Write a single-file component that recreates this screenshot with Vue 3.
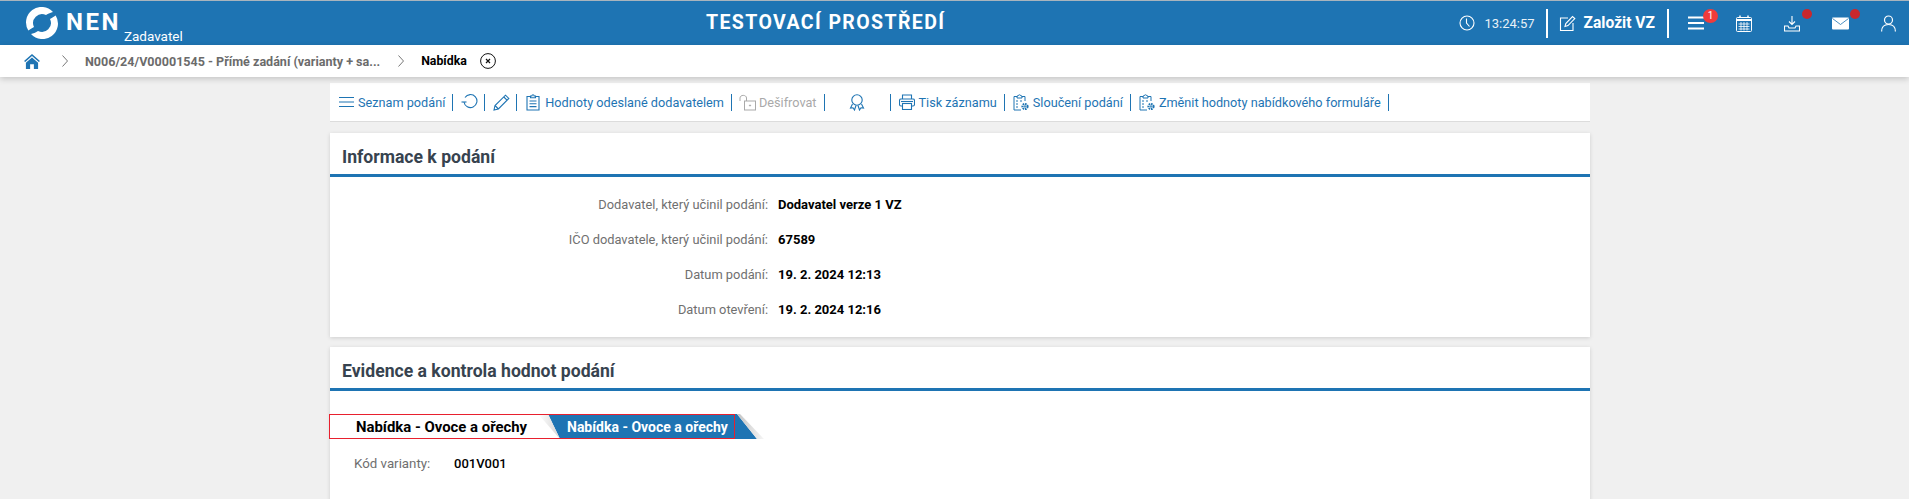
<template>
  <div class="page">
    <header class="topbar">
      <div class="logo">
        <svg class="logo-mark" width="32" height="32" viewBox="0 0 32 32" fill="#fff">
          <path d="M2.3 23.5 A15.5 15.5 0 0 1 27 5 C25 5.5 22 6.5 20 8 A9 9 0 0 0 8 20 C6 21 4 22.5 2.3 23.5 Z" />
          <path d="M2.3 23.5 A15.5 15.5 0 0 1 27 5 C25 5.5 22 6.5 20 8 A9 9 0 0 0 8 20 C6 21 4 22.5 2.3 23.5 Z" transform="rotate(180 16 16)" />
        </svg>
        <span class="logo-name">NEN</span>
        <span class="logo-role">Zadavatel</span>
      </div>
      <div class="env">TESTOVACÍ PROSTŘEDÍ</div>
      <div class="top-right">
        <svg class="clock" width="16" height="16" viewBox="0 0 16 16" fill="none" stroke="#fff" stroke-width="1.1">
          <circle cx="8" cy="8" r="7" />
          <path d="M7.5 3.5 V8 L10.5 11.5" />
        </svg>
        <span class="time">13:24:57</span>
        <span class="top-sep"></span>
        <svg class="pen" width="17" height="17" viewBox="0 0 17 17" fill="none" stroke="#fff" stroke-width="1.1">
          <path d="M9 3 H1.5 V15.5 H14 V8" />
          <path d="M6 11.5 L6.8 8.5 L13.5 1.5 L15.8 3.6 L9 10.6 Z" />
        </svg>
        <span class="create">Založit VZ</span>
        <span class="top-sep second"></span>
        <div class="top-icon">
          <svg width="16" height="14" viewBox="0 0 16 14" fill="#fff">
            <rect y="0.5" width="16" height="2" />
            <rect y="6" width="16" height="2" />
            <rect y="11.5" width="16" height="2" />
          </svg>
          <span class="badge">1</span>
        </div>
        <div class="top-icon">
          <svg width="16" height="17" viewBox="0 0 16 17" fill="none" stroke="#fff">
            <rect x="0.5" y="2.5" width="15" height="14" rx="1" />
            <path d="M0.5 5 H15.5" stroke-width="2" />
            <path d="M4 0.5 V3 M12 0.5 V3" stroke-width="1.5" />
            <path d="M2.5 9 H13.5 M2.5 11.5 H13.5 M2.5 14 H13.5 M5 7 V15.5 M8 7 V15.5 M11 7 V15.5" stroke-width="0.8" />
          </svg>
        </div>
        <div class="top-icon">
          <svg width="16" height="17" viewBox="0 0 16 17" fill="none" stroke="#fff" stroke-width="1.1">
            <path d="M8 1 V9 M5 6.5 L8 9.5 L11 6.5" />
            <path d="M4 11 H0.5 V16 H15.5 V11 H12 L11 13 H5 Z" />
          </svg>
          <span class="dot"></span>
        </div>
        <div class="top-icon">
          <svg width="17" height="13" viewBox="0 0 17 13">
            <rect width="17" height="12" y="0.5" rx="1" fill="#fff" />
            <path d="M0.5 1.5 L8.5 7.5 L16.5 1.5" fill="none" stroke="#1e74b3" stroke-width="0.8" />
          </svg>
          <span class="dot"></span>
        </div>
        <div class="top-icon last">
          <svg width="15" height="17" viewBox="0 0 15 17" fill="none" stroke="#fff" stroke-width="1.2">
            <circle cx="7.5" cy="5" r="4" />
            <path d="M0.6 16.5 C0.6 11.5 3.5 9.5 7.5 9.5 C11.5 9.5 14.4 11.5 14.4 16.5" />
          </svg>
        </div>
      </div>
    </header>

    <nav class="crumbs">
      <svg class="home" width="16" height="15" viewBox="0 0 17 16" fill="#1e74b3">
        <path d="M8.5 0 L17 7.5 L15.8 8.6 L8.5 2.2 L1.2 8.6 L0 7.5 Z" />
        <path d="M8.5 3.6 L15 9.2 V16 H10.5 V11 H6.5 V16 H2 V9.2 Z" />
      </svg>
      <svg class="chev" width="6" height="12" viewBox="0 0 6 12" fill="none" stroke="#777"><path d="M0.5 0.5 L5.5 6 L0.5 11.5" /></svg>
      <span class="crumb">N006/24/V00001545 - Přímé zadání (varianty + sa...</span>
      <svg class="chev second" width="6" height="12" viewBox="0 0 6 12" fill="none" stroke="#777"><path d="M0.5 0.5 L5.5 6 L0.5 11.5" /></svg>
      <span class="crumb current">Nabídka</span>
      <svg class="close" width="16" height="16" viewBox="0 0 16 16" fill="none" stroke="#111">
        <circle cx="8" cy="8" r="7.4" />
        <path d="M6 6 L10 10 M10 6 L6 10" stroke-width="1.2" />
      </svg>
    </nav>

    <main class="content">
      <div class="toolbar">
        <a class="tool">
          <svg width="15" height="12" viewBox="0 0 15 12" fill="none" stroke="#1e74b3"><path d="M0 1.5 H15 M0 6 H15 M0 10.5 H15" /></svg>
          <span>Seznam podání</span>
        </a>
        <a class="tool icon-only">
          <svg width="17" height="16" viewBox="0 0 17 16" fill="none" stroke="#1e74b3" stroke-width="1.1">
            <path d="M4 3.5 A6.5 6.5 0 1 1 3 8" />
            <path d="M0.5 8 H5.5" />
          </svg>
        </a>
        <a class="tool icon-only">
          <svg width="17" height="17" viewBox="0 0 17 17" fill="none" stroke="#1e74b3" stroke-width="1.1">
            <path d="M1 16 L2 11.5 L12.5 1.2 L15.8 4.4 L5.4 15 Z M2 11.5 L5.4 15 M10.8 3 L14 6.2" />
          </svg>
        </a>
        <a class="tool clip">
          <svg width="14" height="17" viewBox="0 0 14 17" fill="none" stroke="#1e74b3" stroke-width="1.1">
            <path d="M4.5 2.5 H1 V16 H13 V2.5 H9.5" />
            <path d="M4.5 3.8 V2 H5.8 C6 0.4 8 0.4 8.2 2 H9.5 V3.8 Z" />
            <path d="M3.5 7 H10.5 M3.5 9.8 H10.5 M3.5 12.6 H10.5" />
          </svg>
          <span>Hodnoty odeslané dodavatelem</span>
        </a>
        <a class="tool disabled">
          <svg width="17" height="17" viewBox="0 0 17 17" fill="none" stroke="#a9a9a9" stroke-width="1">
            <rect x="5.5" y="7" width="11" height="9" />
            <path d="M1 7 V4 C1 0.5 7.5 0.5 7.5 4 V7" />
            <circle cx="11" cy="11.5" r="0.6" fill="#a9a9a9" />
          </svg>
          <span>Dešifrovat</span>
        </a>
        <a class="tool award">
          <svg width="16" height="17" viewBox="0 0 15 17" fill="none" stroke="#1e74b3" stroke-width="1.1">
            <circle cx="7.5" cy="6" r="5.2" />
            <path d="M3 10 L1 14 L3.5 13.8 L5 16 L6.5 11.5 M12 10 L14 14 L11.5 13.8 L10 16 L8.5 11.5" />
          </svg>
        </a>
        <a class="tool">
          <svg width="16" height="16" viewBox="0 0 16 16" fill="none" stroke="#1e74b3" stroke-width="1.1">
            <path d="M3.5 5 V1 H12.5 V5" />
            <rect x="0.5" y="5" width="15" height="7" rx="1.5" />
            <rect x="3.5" y="9.5" width="9" height="6" fill="#fff" />
            <path d="M2 7.5 H14" />
          </svg>
          <span>Tisk záznamu</span>
        </a>
        <a class="tool">
          <svg width="16" height="17" viewBox="0 0 16 17" fill="none" stroke="#1e74b3" stroke-width="1">
            <path d="M4 2.5 H1 V16 H8 M12 7 V2.5 H9" />
            <path d="M4 4 V2 H5 C5.3 0.4 7.7 0.4 8 2 H9 V4 Z" />
            <path d="M3 7 H5 M3 10 H5 M3 13 H5 M7 7 H9" />
            <circle cx="12" cy="12.5" r="2.6" stroke-width="2" stroke-dasharray="1.6 0.8" />
            <circle cx="12" cy="12.5" r="0.8" />
          </svg>
          <span>Sloučení podání</span>
        </a>
        <a class="tool">
          <svg width="16" height="17" viewBox="0 0 16 17" fill="none" stroke="#1e74b3" stroke-width="1">
            <path d="M4 2.5 H1 V16 H8 M12 7 V2.5 H9" />
            <path d="M4 4 V2 H5 C5.3 0.4 7.7 0.4 8 2 H9 V4 Z" />
            <path d="M3 7 H5 M3 10 H5 M3 13 H5 M7 7 H9" />
            <circle cx="12" cy="12.5" r="2.6" stroke-width="2" stroke-dasharray="1.6 0.8" />
            <circle cx="12" cy="12.5" r="0.8" />
          </svg>
          <span>Změnit hodnoty nabídkového formuláře</span>
        </a>
      </div>

      <section class="card info">
        <h2 class="card-title">Informace k podání</h2>
        <dl class="rows">
          <div v-for="row in infoRows" :key="row.label" class="row">
            <dt>{{ row.label }}:</dt>
            <dd>{{ row.value }}</dd>
          </div>
        </dl>
      </section>

      <section class="card evidence">
        <h2 class="card-title">Evidence a kontrola hodnot podání</h2>
        <div class="tabs">
          <div class="tab plain">Nabídka - Ovoce a ořechy</div>
          <div class="tab active">Nabídka - Ovoce a ořechy</div>
          <div class="fold fold-left"></div>
          <div class="fold fold-right"></div>
          <div class="tab-outline"></div>
        </div>
        <div class="variant">
          <span class="variant-label">Kód varianty:</span>
          <span class="variant-value">001V001</span>
        </div>
      </section>
    </main>
  </div>
</template>

<script setup>
const infoRows = [
  { label: 'Dodavatel, který učinil podání', value: 'Dodavatel verze 1 VZ' },
  { label: 'IČO dodavatele, který učinil podání', value: '67589' },
  { label: 'Datum podání', value: '19. 2. 2024 12:13' },
  { label: 'Datum otevření', value: '19. 2. 2024 12:16' }
]
</script>

<style>
html, body {
  margin: 0;
  height: 100%;
  overflow: hidden;
  background: #f0f0f0;
}
</style>

<style scoped>
.page {
  height: 499px;
  overflow: hidden;
  background: #f0f0f0;
  font-family: Roboto, "Liberation Sans", sans-serif;
  font-size: 13px;
}

.topbar {
  height: 44px;
  border-top: 1px solid #a9b4bd;
  background: #1e74b3;
  color: #fff;
  display: flex;
  align-items: center;
}

.logo {
  display: flex;
  align-items: center;
  padding-left: 26px;
  width: 680px;
  box-sizing: border-box;
}

.logo-name {
  margin-left: 8px;
  font-size: 24px;
  font-weight: 700;
  letter-spacing: 2.5px;
  line-height: 24px;
  margin-top: -3px;
}

.logo-role {
  margin-left: 3px;
  font-size: 13.5px;
  margin-top: 26px;
  line-height: 16px;
}

.env {
  font-size: 19.5px;
  font-weight: 700;
  letter-spacing: 1.4px;
  margin: -1px 0 0 26px;
}

.top-right {
  margin-left: auto;
  display: flex;
  align-items: center;
  height: 100%;
  padding-right: 13px;
}

.clock {
  margin-right: 9px;
}

.time {
  font-size: 13px;
  color: #e8f1f7;
}

.top-sep {
  width: 2px;
  height: 29px;
  background: #fff;
  margin: 0 11px 0 11px;
}

.top-sep.second {
  margin: 0 19px 0 12px;
}

.create {
  margin-left: 8px;
  font-size: 15.6px;
  font-weight: 700;
}

.top-icon {
  position: relative;
  height: 17px;
  display: flex;
  align-items: center;
  margin-right: 32px;
}

.top-icon.last {
  margin-right: 0;
}

.badge {
  position: absolute;
  top: -6px;
  left: 15px;
  width: 15px;
  height: 14px;
  border-radius: 50%;
  background: #ef3b3b;
  font-size: 10px;
  line-height: 14px;
  text-align: center;
}

.dot {
  position: absolute;
  top: -6px;
  left: 18px;
  width: 10px;
  height: 10px;
  border-radius: 50%;
  background: #c9282d;
}

.crumbs {
  height: 32px;
  background: #fff;
  box-shadow: 0 2px 6px rgba(0, 0, 0, 0.18);
  display: flex;
  align-items: center;
  padding-left: 24px;
  position: relative;
}

.chev {
  margin-left: 22px;
}

.chev.second {
  margin-left: 18px;
}

.crumb {
  margin-left: 17px;
  font-size: 12.55px;
  font-weight: 700;
  color: #6b6b6b;
}

.crumb.current {
  font-size: 12.3px;
  color: #000;
}

.close {
  margin-left: 13px;
}

.content {
  width: 1260px;
  margin: 6px 0 0 330px;
}

.toolbar {
  height: 39px;
  background: #fff;
  border-bottom: 1px solid #dcdcdc;
  box-sizing: border-box;
  display: flex;
  align-items: center;
  padding-left: 9px;
}

.tool {
  display: flex;
  align-items: center;
  gap: 4px;
  height: 17px;
  color: #1e74b3;
  font-size: 12.7px;
  padding-right: 7px;
  margin-right: 8px;
  border-right: 1px solid #1e74b3;
}

.tool.icon-only {
  padding-right: 6px;
}

.tool.clip {
  padding-left: 1px;
  gap: 5px;
}

.tool.disabled {
  color: #a9a9a9;
  gap: 3px;
  margin-left: -1px;
}

.tool.award {
  padding: 0 25px 0 16px;
}

.card {
  background: #fff;
  box-shadow: 0 1px 4px rgba(0, 0, 0, 0.14);
  margin-top: 11px;
}

.card-title {
  margin: 0;
  height: 33px;
  padding: 8px 0 0 12px;
  border-bottom: 3px solid #1e74b3;
  font-size: 17.6px;
  font-weight: 700;
  line-height: 33px;
  color: #37434f;
}

.info {
  height: 204px;
}

.rows {
  margin: 0;
  padding-top: 10px;
}

.row {
  display: flex;
  height: 35px;
  align-items: center;
}

.row dt {
  width: 438px;
  text-align: right;
  color: #6f6f6f;
  font-size: 12.85px;
}

.row dd {
  margin: 0 0 0 10px;
  color: #000;
  font-size: 13px;
  font-weight: 700;
}

.evidence {
  height: 160px;
  margin-top: 10px;
}

.tabs {
  position: relative;
  display: flex;
  margin-top: 23px;
  height: 25px;
}

.tab {
  height: 25px;
  padding-top: 1px;
  line-height: 25px;
  font-weight: 700;
  box-sizing: border-box;
}

.tab.plain {
  width: 218px;
  padding-left: 26px;
  font-size: 14.9px;
  color: #000;
}

.tab.active {
  width: 209px;
  padding-left: 19px;
  font-size: 14px;
  color: #fff;
  background: #1e74b3;
  clip-path: polygon(0 0, 189px 0, 209px 100%, 12px 100%);
}

.fold {
  position: absolute;
  top: 0;
  height: 25px;
}

.fold-left {
  left: 208px;
  width: 22px;
  background: linear-gradient(90deg, #fff, #d6d6d6);
  clip-path: polygon(0 0, 10px 0, 22px 100%);
}

.fold-right {
  left: 407px;
  width: 27px;
  background: linear-gradient(90deg, #c4c4c4, #f6f6f6);
  clip-path: polygon(0 0, 3px 0, 27px 100%, 20px 100%);
}

.tab-outline {
  position: absolute;
  left: -1px;
  top: 0;
  width: 406px;
  height: 25px;
  border: 1px solid #e8202e;
  box-sizing: border-box;
  pointer-events: none;
}

.variant {
  display: flex;
  padding: 17px 0 0 24px;
  font-size: 13.3px;
  line-height: 16px;
}

.variant-label {
  width: 100px;
  color: #6f6f6f;
}

.variant-value {
  color: #000;
  font-size: 13px;
  font-weight: 500;
}
</style>
